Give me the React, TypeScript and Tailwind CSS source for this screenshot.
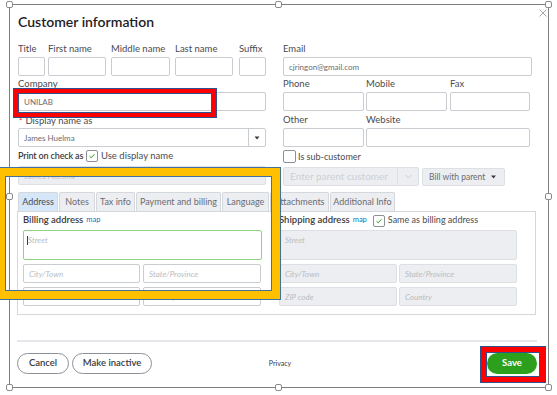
import React from "react";

const inputCls =
  "h-[19px] border border-[#c9ccd1] rounded-[2px] bg-white flex items-center px-[5px] text-[8px] text-[#6b6c72]";
const grayCls =
  "h-[19px] border border-[#dcdfe3] rounded-[2px] bg-[#eceef1] flex items-center px-[5px] text-[8px] italic text-[#b9bcc1]";
const labelCls = "h-[10px] leading-[10px] text-[9.5px] text-[#4a4b50] whitespace-nowrap";

function Field({ label, w, children, ml = 0 }: { label?: React.ReactNode; w: number; children?: React.ReactNode; ml?: number }) {
  return (
    <div className="flex flex-col" style={{ width: w, marginLeft: ml }}>
      <div className={labelCls}>{label}</div>
      <div className={`${inputCls} mt-[3px]`}>{children}</div>
    </div>
  );
}

function Check({ checked }: { checked?: boolean }) {
  return (
    <div className="w-[12px] h-[12px] border border-[#8d9096] rounded-[2px] bg-white flex items-center justify-center shrink-0">
      {checked && (
        <svg width="8" height="8" viewBox="0 0 8 8">
          <path d="M1.5 4.2 L3.2 5.8 L6.5 2.2" fill="none" stroke="#2ca01c" strokeWidth="1" />
        </svg>
      )}
    </div>
  );
}

function Handle({ x, y }: { x: number; y: number }) {
  return (
    <div
      className="absolute w-[7px] h-[7px] rounded-[2px] border border-[#8a8a8a] bg-white"
      style={{ left: x - 3, top: y - 3 }}
    />
  );
}

export default function App() {
  const tabs: [string, number, boolean][] = [
    ["Address", 40, true],
    ["Notes", 36, false],
    ["Tax info", 39, false],
    ["Payment and billing", 85, false],
    ["Language", 47, false],
    ["Attachments", 59, false],
    ["Additional Info", 65, false],
  ];
  return (
    <div className="relative w-[557px] h-[395px] bg-white overflow-hidden font-['Lato',sans-serif] text-[#393a3d]">
      <div className="pl-[17px] pt-[12px] w-[537px]">
        <div className="ml-[1px] h-[20px] leading-[20px] text-[14px] font-semibold text-[#1f2023]">
          Customer information
        </div>

        {/* top form */}
        <div className="flex mt-[12px]">
          {/* left column */}
          <div className="ml-[1px] w-[248px] flex flex-col">
            <div className="flex">
              <Field label="Title" w={27} />
              <Field label="First name" w={58} ml={3} />
              <Field label="Middle name" w={59} ml={5} />
              <Field label="Last name" w={58} ml={5} />
              <Field label="Suffix" w={27} ml={6} />
            </div>
            <div className="mt-[3px]">
              <Field label="Company" w={248}>
                UNILAB
              </Field>
            </div>
            <div className="mt-[5px] flex flex-col">
              <div className={`${labelCls} flex items-start`}>
                <span className="text-[#d52b1e] text-[8px] leading-[8px] mt-[1px] mr-[3px] ml-[1px]">*</span>
                <span>Display name as</span>
              </div>
              <div className={`${inputCls} mt-[2px] !pr-0`}>
                <span className="flex-1">James Huelma</span>
                <div className="w-[17px] h-full border-l border-[#c9ccd1] flex items-center justify-center">
                  <svg width="6" height="4" viewBox="0 0 6 4">
                    <path d="M0.5 0.5 L5.5 0.5 L3 3.5 Z" fill="#393a3d" />
                  </svg>
                </div>
              </div>
            </div>
            <div className="mt-[3px] h-[12px] flex items-center">
              <span className="text-[9px] font-semibold text-[#393a3d] leading-[12px] w-[68px] whitespace-nowrap tracking-[-0.15px]">
                Print on check as
              </span>
              <Check checked />
              <span className="ml-[3px] text-[9.5px] text-[#4a4b50] leading-[12px]">Use display name</span>
            </div>
            <div className={`${grayCls} mt-[4px] h-[18px] not-italic text-[#c3c6cb]`}>James Huelma</div>
          </div>

          {/* right column */}
          <div className="ml-[17px] w-[249px] flex flex-col">
            <Field label="Email" w={249}>
              cjringon@gmail.com
            </Field>
            <div className="flex mt-[3px]">
              <Field label="Phone" w={81} />
              <Field label="Mobile" w={81} ml={2} />
              <Field label="Fax" w={80} ml={3} />
            </div>
            <div className="flex mt-[4px]">
              <Field label="Other" w={81} />
              <Field label="Website" w={164} ml={2} />
            </div>
            <div className="mt-[3px] h-[13px] flex items-center">
              <div className="w-[13px] h-[13px] border border-[#8d9096] rounded-[2px] bg-white" />
              <span className="ml-[2px] text-[9px] text-[#4a4b50]">Is sub-customer</span>
            </div>
            <div className="mt-[4px] flex items-start">
              <div className="w-[136px] h-[19px] border border-[#dcdfe3] rounded-[2px] bg-[#eceef1] flex items-center">
                <span className="flex-1 pl-[6px] text-[10px] text-[#cdd0d4] whitespace-nowrap">Enter parent customer</span>
                <div className="w-[21px] h-full border-l border-[#dcdfe3] flex items-center justify-center">
                  <svg width="7" height="5" viewBox="0 0 7 5">
                    <path d="M0.5 1 L3.5 4 L6.5 1" fill="none" stroke="#c3c6cb" strokeWidth="0.8" />
                  </svg>
                </div>
              </div>
              <div className="ml-[3px] mt-[1px] w-[83px] h-[18px] border border-[#dcdfe3] rounded-[2px] bg-[#eceef1] flex items-center pl-[6px] pr-[8px]">
                <span className="flex-1 text-[8.5px] text-[#6b6c72] whitespace-nowrap">Bill with parent</span>
                <svg width="5" height="4" viewBox="0 0 5 4">
                  <path d="M0 0.5 L5 0.5 L2.5 3.5 Z" fill="#393a3d" />
                </svg>
              </div>
            </div>
          </div>
        </div>

        {/* tabs */}
        <div className="mt-[6px] ml-[1px] flex gap-[1px] h-[19px]">
          {tabs.map(([t, w, a]) => (
            <div
              key={t}
              className={`h-[19px] border border-b-0 border-[#d4d7dc] rounded-t-[2px] flex items-center justify-center text-[9px] whitespace-nowrap ${
                a ? "bg-[#d5e7f8] text-[#4a4b50]" : "bg-[#eceef1] text-[#6b6c72]"
              }`}
              style={{ width: w }}
            >
              {t}
            </div>
          ))}
        </div>

        {/* panel */}
        <div className="w-[519px] h-[104px] border border-[#d4d7dc] pl-[5px] pt-[3px] flex">
          <div className="w-[239px] flex flex-col">
            <div className="h-[10px] flex items-center whitespace-nowrap">
              <span className="text-[9.5px] font-semibold text-[#393a3d]">Billing address</span>
              <span className="ml-[3px] text-[7.5px] text-[#0077c5]">map</span>
            </div>
            <div className="mt-[5px] h-[30px] border border-[#8fd283] rounded-[2px] px-[3px] pt-[4px] flex items-start">
              <span className="w-px h-[9px] bg-[#393a3d] mt-[1px]" />
              <span className="text-[8px] italic text-[#b9bcc1] leading-[10px]">Street</span>
            </div>
            <div className="mt-[4px] flex gap-[3px]">
              <div className={`${inputCls} w-[117px] italic text-[#b9bcc1]`}>City/Town</div>
              <div className={`${inputCls} w-[118px] italic text-[#b9bcc1]`}>State/Province</div>
            </div>
            <div className="mt-[4px] flex gap-[3px]">
              <div className={`${inputCls} w-[117px] italic text-[#b9bcc1]`}>ZIP code</div>
              <div className={`${inputCls} w-[118px] italic text-[#b9bcc1]`}>Country</div>
            </div>
          </div>
          <div className="ml-[17px] w-[238px] flex flex-col">
            <div className="h-[10px] flex items-center whitespace-nowrap">
              <span className="text-[9.5px] font-semibold text-[#393a3d]">Shipping address</span>
              <span className="ml-[3px] text-[7.5px] text-[#0077c5]">map</span>
              <div className="ml-[6px] mt-[2px]">
                <Check checked />
              </div>
              <span className="ml-[3px] text-[9px] text-[#4a4b50]">Same as billing address</span>
            </div>
            <div className="mt-[5px] h-[30px] border border-[#dcdfe3] rounded-[2px] bg-[#eceef1] px-[5px] pt-[4px] text-[8px] italic text-[#b9bcc1] leading-[10px]">
              Street
            </div>
            <div className="mt-[4px] flex gap-[2px]">
              <div className={`${grayCls} w-[118px]`}>City/Town</div>
              <div className={`${grayCls} w-[118px]`}>State/Province</div>
            </div>
            <div className="mt-[4px] flex gap-[2px]">
              <div className={`${grayCls} w-[118px]`}>ZIP code</div>
              <div className={`${grayCls} w-[118px]`}>Country</div>
            </div>
          </div>
        </div>

        {/* separator */}
        <div className="mt-[25px] w-[520px] h-[2px] bg-[#e6e7ea]" />

        {/* footer */}
        <div className="mt-[11px] w-[520px] grid grid-cols-3 items-center h-[21px]">
          <div className="flex gap-[3px]">
            <div className="w-[52px] h-[21px] rounded-full border border-[#8d9096] flex items-center justify-center text-[9.5px] font-semibold text-[#393a3d]">
              Cancel
            </div>
            <div className="w-[80px] h-[21px] rounded-full border border-[#8d9096] flex items-center justify-center text-[9.5px] font-semibold text-[#393a3d]">
              Make inactive
            </div>
          </div>
          <div className="flex justify-center">
            <span className="ml-[6px] text-[7px] text-[#393a3d]">Privacy</span>
          </div>
          <div className="flex justify-end">
            <div className="w-[50px] h-[21px] rounded-full bg-[#2ca01c] flex items-center justify-center text-[9.5px] font-bold text-white">
              Save
            </div>
          </div>
        </div>
      </div>

      {/* selection frame overlay */}
      <div className="absolute left-[9px] top-[4px] w-[540px] h-[384px] border border-[#7f7f7f] pointer-events-none" />
      <Handle x={9} y={4} />
      <Handle x={278} y={4} />
      <Handle x={548} y={4} />
      <Handle x={9} y={196} />
      <Handle x={548} y={196} />
      <Handle x={9} y={387} />
      <Handle x={278} y={387} />
      <Handle x={548} y={387} />

      {/* close X */}
      <svg className="absolute left-[539px] top-[9px]" width="8" height="8" viewBox="0 0 8 8">
        <path d="M0.5 0.5 L7.5 7.5 M7.5 0.5 L0.5 7.5" stroke="#8d9096" strokeWidth="0.8" />
      </svg>

      {/* yellow annotation */}
      <div className="absolute left-[-3px] top-[168px] w-[283px] h-[131px] border-[8px] border-[#ffc000] outline outline-1 outline-[#41719c] shadow-[inset_0_0_0_1px_#41719c] pointer-events-none" />

      {/* red annotations */}
      <div className="absolute left-[14px] top-[89px] w-[202px] h-[28px] border-[4px] border-[#ff0000] outline outline-1 outline-[#2f528f] shadow-[inset_0_0_0_1px_#2f528f]" />
      <div className="absolute left-[481px] top-[347px] w-[64px] h-[35px] border-[5px] border-[#ff0000] outline outline-1 outline-[#2f528f] shadow-[inset_0_0_0_1px_#2f528f]" />
    </div>
  );
}
